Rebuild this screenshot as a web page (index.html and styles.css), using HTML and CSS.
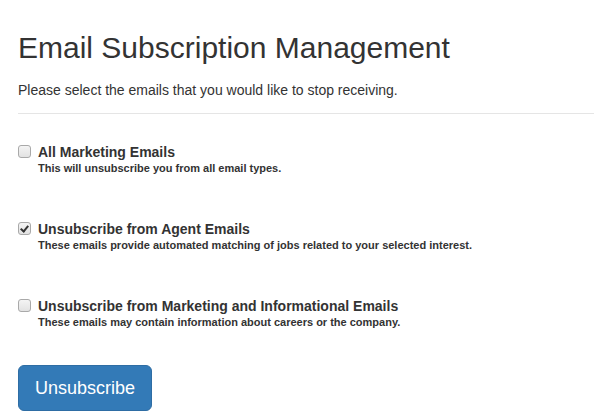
FILE: index.html
```html
<!DOCTYPE html>
<html lang="en">
<head>
  <meta charset="UTF-8" />
  <title>Email Subscription Management</title>
  <link rel="stylesheet" href="styles.css">
</head>
<body>
  <div class="container">
    <h1>Email Subscription Management</h1>
    <p class="lead">Please select the emails that you would like to stop receiving.</p>
    <hr />

    <div class="option">
      <input type="checkbox" id="all" />
      <div>
        <label for="all">All Marketing Emails</label>
        <div class="help">This will unsubscribe you from all email types.</div>
      </div>
    </div>

    <div class="option">
      <input type="checkbox" id="agent" checked />
      <div>
        <label for="agent">Unsubscribe from Agent Emails</label>
        <div class="help">These emails provide automated matching of jobs related to your selected interest.</div>
      </div>
    </div>

    <div class="option">
      <input type="checkbox" id="info" />
      <div>
        <label for="info">Unsubscribe from Marketing and Informational Emails</label>
        <div class="help">These emails may contain information about careers or the company.</div>
      </div>
    </div>

    <button class="btn">Unsubscribe</button>
  </div>
</body>
</html>
```

FILE: styles.css
```css
body {
  margin: 0;
  font-family: "Liberation Sans", Arial, sans-serif;
  color: #333;
  background: #fff;
}

.container {
  padding: 0 0 0 18px;
}

h1 {
  margin: 0;
  padding-top: 31px;
  font-size: 30px;
  font-weight: 400;
  line-height: 33px;
}

.lead {
  margin: 16px 0 0;
  font-size: 14px;
  line-height: 20px;
}

hr {
  margin: 13px 0 0;
  border: 0;
  border-top: 1px solid #e5e5e5;
}

.option {
  display: flex;
  align-items: flex-start;
  gap: 7px;
  margin-top: 29px;
  height: 48px;
}

.option input {
  appearance: none;
  flex: none;
  position: relative;
  margin: 2px 0 0;
  width: 13px;
  height: 13px;
  border: 1px solid #a9a9a9;
  border-radius: 3px;
  background: linear-gradient(#f4f4f4, #e2e2e2);
  box-sizing: border-box;
}

.option input:checked::after {
  content: "";
  position: absolute;
  left: 3px;
  top: 1px;
  width: 3px;
  height: 6px;
  border: solid #333;
  border-width: 0 2px 2px 0;
  transform: rotate(40deg);
}

.option label {
  display: block;
  font-size: 14px;
  font-weight: 700;
  line-height: 18px;
}

.help {
  font-size: 11px;
  font-weight: 700;
  line-height: 15px;
}

.btn {
  margin-top: 20px;
  padding: 10px 16px;
  font-family: "Liberation Sans", Arial, sans-serif;
  font-size: 18px;
  line-height: 24px;
  color: #fff;
  background: #337ab7;
  border: 1px solid #2e6da4;
  border-radius: 6px;
  cursor: pointer;
}
```
